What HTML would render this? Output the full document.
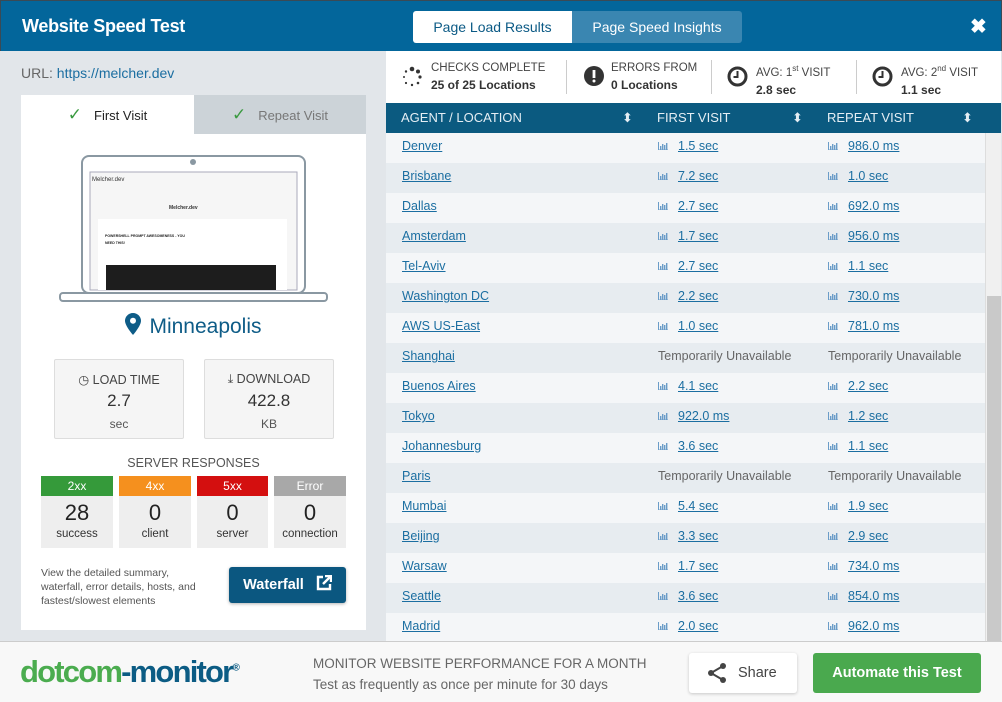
<!DOCTYPE html>
<html><head><meta charset="utf-8"><style>
*{box-sizing:border-box;margin:0;padding:0}
body{width:1002px;height:702px;overflow:hidden;font-family:"Liberation Sans",sans-serif;background:#e2e6ea;position:relative;color:#333}
.hdr{position:absolute;left:0;top:0;width:1002px;height:51px;background:#03669b;border:1px solid #3a4a55;border-bottom:none}
.hdr h1{position:absolute;left:21px;top:15px;font-size:18px;color:#fff;font-weight:bold;letter-spacing:-0.3px}
.tab1{position:absolute;left:412px;top:10px;width:159px;height:32px;background:#fff;border-radius:3px 0 0 3px;color:#0b5a85;font-size:14px;text-align:center;line-height:32px}
.tab2{position:absolute;left:571px;top:10px;width:170px;height:32px;background:#3a86b1;border-radius:0 3px 3px 0;color:#fff;font-size:14px;text-align:center;line-height:32px}
.x{position:absolute;left:969px;top:13px;color:#fff;font-size:20px;font-weight:bold}
.url{position:absolute;left:21px;top:65px;font-size:14px;color:#666}
.url span{color:#1b6ea1}
.card{position:absolute;left:21px;top:95px;width:345px;height:535px;background:#fff}
.vt1{position:absolute;left:0;top:0;width:173px;height:39px;background:#fff;font-size:13px;color:#222;line-height:39px;text-align:center}
.vt2{position:absolute;left:173px;top:0;width:172px;height:39px;background:#ccd3d8;font-size:13px;color:#777;line-height:39px;text-align:center}
.ck{color:#3a9a40;font-size:17px;margin-right:12px}
.city{position:absolute;left:0;width:345px;top:218px;text-align:center;font-size:21px;color:#0e5c87}
.box{position:absolute;top:264px;width:130px;height:80px;background:#f5f5f5;border:1px solid #ddd;border-radius:2px;text-align:center}
.box .t{font-size:12.5px;color:#444;margin-top:12px}
.box .v{font-size:17px;color:#333;margin-top:4px}
.box .u{font-size:12px;color:#555;margin-top:6px}
.sr{position:absolute;left:0;width:345px;top:361px;text-align:center;font-size:12.5px;color:#555}
.rc{position:absolute;top:381px;height:72px;background:#eee;text-align:center}
.rc .h{height:20px;color:#fff;font-size:12px;line-height:20px}
.rc .n{font-size:22px;color:#222;margin-top:4px}
.rc .l{font-size:11.5px;color:#333;margin-top:2px}
.desc{position:absolute;left:20px;top:471px;font-size:10.5px;line-height:14px;color:#555;width:170px}
.wf{position:absolute;left:208px;top:472px;width:117px;height:36px;background:#0b5780;border-radius:3px;color:#fff;font-weight:bold;font-size:14.5px;line-height:36px;text-align:center;box-shadow:0 1px 3px rgba(0,0,0,.3)}
.sum{position:absolute;left:386px;top:51px;width:615px;height:52px;background:#fff}
.si{position:absolute;top:9px;font-size:11.5px;color:#444;line-height:17px}
.si b{font-size:12px;color:#333}
.sep{position:absolute;top:9px;width:1px;height:34px;background:#ccc}
.th{position:absolute;left:386px;top:103px;width:615px;height:30px;background:#0b5a80;color:#e5eef4;font-size:13px;line-height:30px}
.th span{position:absolute}
.rows{position:absolute;left:386px;top:133px;width:599px;height:508px;overflow:hidden}
.r{height:30px;position:relative;font-size:12.5px;line-height:26px}
.r:nth-child(odd){background:#f4f6f8}
.r:nth-child(even){background:#e7ecf0}
.r a{color:#1b6ea1;text-decoration:underline;position:absolute}
.r svg{position:absolute;top:9px}
.r .tu{position:absolute;color:#666}
.sb{position:absolute;left:985px;top:133px;width:16px;height:508px;background:#f0f0f0;border-left:1px solid #ddd}
.sb div{position:absolute;left:1px;top:163px;width:14px;height:345px;background:#c9c9c9}
.foot{position:absolute;left:0;top:641px;width:1002px;height:61px;background:#f8f8f8;border-top:1px solid #ccc}
.logo{position:absolute;left:20px;top:12px;font-size:31px;font-weight:bold;letter-spacing:-1.8px;color:#4bac4f}
.logo span{color:#0c5c84}
.ft{position:absolute;left:313px;top:11px;font-size:13.5px;color:#666;line-height:21px}
.share{position:absolute;left:689px;top:11px;width:108px;height:40px;background:#fff;border-radius:3px;box-shadow:0 1px 3px rgba(0,0,0,.2);font-size:14.5px;color:#444;line-height:40px}
.auto{position:absolute;left:813px;top:11px;width:168px;height:40px;background:#4aa94e;border-radius:3px;color:#fff;font-weight:bold;font-size:14.5px;line-height:40px;text-align:center}
</style></head><body>
<svg width="0" height="0" style="position:absolute"><defs><symbol id="b" viewBox="0 0 10 8"><path d="M0.5 0v8h9.5" fill="none" stroke="#6a9cc8" stroke-width="1"/><rect x="2" y="4" width="1.4" height="4" fill="#6a9cc8"/><rect x="4" y="2" width="1.4" height="6" fill="#6a9cc8"/><rect x="6" y="3" width="1.4" height="5" fill="#6a9cc8"/><rect x="8" y="1" width="1.4" height="7" fill="#6a9cc8"/></symbol></defs></svg>
<div class="hdr"><h1>Website Speed Test</h1>
<div class="tab1">Page Load Results</div><div class="tab2">Page Speed Insights</div><div class="x">✖</div></div>
<div class="url">URL: <span>https://melcher.dev</span></div>
<div class="card">
<div class="vt1"><span class="ck">✓</span>First Visit</div>
<div class="vt2"><span class="ck">✓</span>Repeat Visit</div>
<svg style="position:absolute;left:38px;top:58px" width="270" height="150">
<rect x="23" y="3" width="223" height="137" rx="7" fill="#fff" stroke="#8a98a2" stroke-width="2"/>
<circle cx="134" cy="9" r="3" fill="#8a98a2"/>
<rect x="31" y="19" width="207" height="118" fill="#f6f6f6" stroke="#aab"/>
<text x="33" y="28" font-size="6" font-family="Liberation Sans" fill="#333">Melcher.dev</text>
<text x="110" y="56" font-size="5" font-weight="bold" font-family="Liberation Sans" fill="#333">Melcher.dev</text>
<rect x="39" y="66" width="189" height="71" fill="#fff"/>
<text x="46" y="84" font-size="3.5" font-weight="bold" font-family="Liberation Sans" fill="#222">POWERSHELL PROMPT AWESOMENESS - YOU</text>
<text x="46" y="91" font-size="3.5" font-weight="bold" font-family="Liberation Sans" fill="#222">NEED THIS!</text>
<rect x="47" y="112" width="170" height="25" fill="#1d1d1d"/>
<rect x="1" y="140" width="267" height="8" rx="3" fill="#fff" stroke="#8a98a2" stroke-width="2"/>
</svg>
<div class="city"><svg width="16" height="22" viewBox="0 0 16 22" style="vertical-align:-2px;margin-right:8px"><path d="M8 0C3.6 0 0 3.5 0 7.8 0 13 8 22 8 22s8-9 8-14.2C16 3.5 12.4 0 8 0z" fill="#0e5c87"/><circle cx="8" cy="7.8" r="3" fill="#fff"/></svg>Minneapolis</div>
<div class="box" style="left:33px"><div class="t">◷ LOAD TIME</div><div class="v">2.7</div><div class="u">sec</div></div>
<div class="box" style="left:183px"><div class="t">⤓ DOWNLOAD</div><div class="v">422.8</div><div class="u">KB</div></div>
<div class="sr">SERVER RESPONSES</div>
<div class="rc" style="left:20px;width:72px"><div class="h" style="background:#359a3a">2xx</div><div class="n">28</div><div class="l">success</div></div>
<div class="rc" style="left:98px;width:72px"><div class="h" style="background:#f5901e">4xx</div><div class="n">0</div><div class="l">client</div></div>
<div class="rc" style="left:176px;width:71px"><div class="h" style="background:#d40f0f">5xx</div><div class="n">0</div><div class="l">server</div></div>
<div class="rc" style="left:253px;width:72px"><div class="h" style="background:#a8a8a8">Error</div><div class="n">0</div><div class="l">connection</div></div>
<div class="desc">View the detailed summary, waterfall, error details, hosts, and fastest/slowest elements</div>
<div class="wf">Waterfall <svg width="16" height="16" viewBox="0 0 16 16" style="vertical-align:-2px;margin-left:8px"><path d="M7 2H2v12h12V9" fill="none" stroke="#fff" stroke-width="2.4"/><path d="M9 1h6v6M15 1L7 9" fill="none" stroke="#fff" stroke-width="2.4"/></svg></div>
</div>
<div class="sum">
<svg style="position:absolute;left:15px;top:15px" width="22" height="22"><g fill="#333"><circle cx="11" cy="3" r="2.3"/><circle cx="17" cy="5.5" r="2"/><circle cx="19" cy="11" r="1.6"/><circle cx="17" cy="17" r="1.3"/><circle cx="11" cy="19" r="1.2"/><circle cx="5" cy="17" r="1.1"/><circle cx="3" cy="11" r="1"/><circle cx="5" cy="5.5" r="1.2"/></g></svg>
<div class="si" style="left:45px">CHECKS COMPLETE<br><b>25 of 25 Locations</b></div>
<div class="sep" style="left:180px"></div>
<svg style="position:absolute;left:198px;top:15px" width="20" height="20"><circle cx="10" cy="10" r="10" fill="#333"/><rect x="8.6" y="4" width="2.8" height="8" fill="#fff"/><circle cx="10" cy="15" r="1.5" fill="#fff"/></svg>
<div class="si" style="left:225px">ERRORS FROM<br><b>0 Locations</b></div>
<div class="sep" style="left:325px"></div>
<svg style="position:absolute;left:341px;top:15px" width="21" height="21"><circle cx="10.5" cy="10.5" r="8.5" fill="none" stroke="#333" stroke-width="3"/><path d="M10.5 5v6h-4" fill="none" stroke="#333" stroke-width="2"/></svg>
<div class="si" style="left:370px">AVG: 1<sup style="font-size:8px">st</sup> VISIT<br><b>2.8 sec</b></div>
<div class="sep" style="left:470px"></div>
<svg style="position:absolute;left:486px;top:15px" width="21" height="21"><circle cx="10.5" cy="10.5" r="8.5" fill="none" stroke="#333" stroke-width="3"/><path d="M10.5 5v6h-4" fill="none" stroke="#333" stroke-width="2"/></svg>
<div class="si" style="left:515px">AVG: 2<sup style="font-size:8px">nd</sup> VISIT<br><b>1.1 sec</b></div>
</div>
<div class="th"><span style="left:15px">AGENT / LOCATION</span><span style="left:236px">⬍</span><span style="left:271px">FIRST VISIT</span><span style="left:406px">⬍</span><span style="left:441px">REPEAT VISIT</span><span style="left:576px">⬍</span></div>
<div class="rows">
<div class="r"><a style="left:16px">Denver</a><svg style="left:272px" width="10" height="8"><use href="#b"/></svg><a style="left:292px">1.5 sec</a><svg style="left:442px" width="10" height="8"><use href="#b"/></svg><a style="left:462px">986.0 ms</a></div>
<div class="r"><a style="left:16px">Brisbane</a><svg style="left:272px" width="10" height="8"><use href="#b"/></svg><a style="left:292px">7.2 sec</a><svg style="left:442px" width="10" height="8"><use href="#b"/></svg><a style="left:462px">1.0 sec</a></div>
<div class="r"><a style="left:16px">Dallas</a><svg style="left:272px" width="10" height="8"><use href="#b"/></svg><a style="left:292px">2.7 sec</a><svg style="left:442px" width="10" height="8"><use href="#b"/></svg><a style="left:462px">692.0 ms</a></div>
<div class="r"><a style="left:16px">Amsterdam</a><svg style="left:272px" width="10" height="8"><use href="#b"/></svg><a style="left:292px">1.7 sec</a><svg style="left:442px" width="10" height="8"><use href="#b"/></svg><a style="left:462px">956.0 ms</a></div>
<div class="r"><a style="left:16px">Tel-Aviv</a><svg style="left:272px" width="10" height="8"><use href="#b"/></svg><a style="left:292px">2.7 sec</a><svg style="left:442px" width="10" height="8"><use href="#b"/></svg><a style="left:462px">1.1 sec</a></div>
<div class="r"><a style="left:16px">Washington DC</a><svg style="left:272px" width="10" height="8"><use href="#b"/></svg><a style="left:292px">2.2 sec</a><svg style="left:442px" width="10" height="8"><use href="#b"/></svg><a style="left:462px">730.0 ms</a></div>
<div class="r"><a style="left:16px">AWS US-East</a><svg style="left:272px" width="10" height="8"><use href="#b"/></svg><a style="left:292px">1.0 sec</a><svg style="left:442px" width="10" height="8"><use href="#b"/></svg><a style="left:462px">781.0 ms</a></div>
<div class="r"><a style="left:16px">Shanghai</a><span class="tu" style="left:272px">Temporarily Unavailable</span><span class="tu" style="left:442px">Temporarily Unavailable</span></div>
<div class="r"><a style="left:16px">Buenos Aires</a><svg style="left:272px" width="10" height="8"><use href="#b"/></svg><a style="left:292px">4.1 sec</a><svg style="left:442px" width="10" height="8"><use href="#b"/></svg><a style="left:462px">2.2 sec</a></div>
<div class="r"><a style="left:16px">Tokyo</a><svg style="left:272px" width="10" height="8"><use href="#b"/></svg><a style="left:292px">922.0 ms</a><svg style="left:442px" width="10" height="8"><use href="#b"/></svg><a style="left:462px">1.2 sec</a></div>
<div class="r"><a style="left:16px">Johannesburg</a><svg style="left:272px" width="10" height="8"><use href="#b"/></svg><a style="left:292px">3.6 sec</a><svg style="left:442px" width="10" height="8"><use href="#b"/></svg><a style="left:462px">1.1 sec</a></div>
<div class="r"><a style="left:16px">Paris</a><span class="tu" style="left:272px">Temporarily Unavailable</span><span class="tu" style="left:442px">Temporarily Unavailable</span></div>
<div class="r"><a style="left:16px">Mumbai</a><svg style="left:272px" width="10" height="8"><use href="#b"/></svg><a style="left:292px">5.4 sec</a><svg style="left:442px" width="10" height="8"><use href="#b"/></svg><a style="left:462px">1.9 sec</a></div>
<div class="r"><a style="left:16px">Beijing</a><svg style="left:272px" width="10" height="8"><use href="#b"/></svg><a style="left:292px">3.3 sec</a><svg style="left:442px" width="10" height="8"><use href="#b"/></svg><a style="left:462px">2.9 sec</a></div>
<div class="r"><a style="left:16px">Warsaw</a><svg style="left:272px" width="10" height="8"><use href="#b"/></svg><a style="left:292px">1.7 sec</a><svg style="left:442px" width="10" height="8"><use href="#b"/></svg><a style="left:462px">734.0 ms</a></div>
<div class="r"><a style="left:16px">Seattle</a><svg style="left:272px" width="10" height="8"><use href="#b"/></svg><a style="left:292px">3.6 sec</a><svg style="left:442px" width="10" height="8"><use href="#b"/></svg><a style="left:462px">854.0 ms</a></div>
<div class="r"><a style="left:16px">Madrid</a><svg style="left:272px" width="10" height="8"><use href="#b"/></svg><a style="left:292px">2.0 sec</a><svg style="left:442px" width="10" height="8"><use href="#b"/></svg><a style="left:462px">962.0 ms</a></div>
</div>
<div class="sb"><div></div></div>
<div class="foot">
<div class="logo">dotcom<span>-monitor</span><sup style="font-size:10px;color:#0c5c84">®</sup></div>
<div class="ft">MONITOR WEBSITE PERFORMANCE FOR A MONTH<br>Test as frequently as once per minute for 30 days</div>
<div class="share"><svg width="20" height="22" viewBox="0 0 20 22" style="position:absolute;left:18px;top:9px"><circle cx="16" cy="4" r="3" fill="#444"/><circle cx="4" cy="11" r="3" fill="#444"/><circle cx="16" cy="18" r="3" fill="#444"/><path d="M16 4L4 11l12 7" fill="none" stroke="#444" stroke-width="2"/></svg><span style="position:absolute;left:49px">Share</span></div>
<div class="auto">Automate this Test</div>
</div>
</body></html>
